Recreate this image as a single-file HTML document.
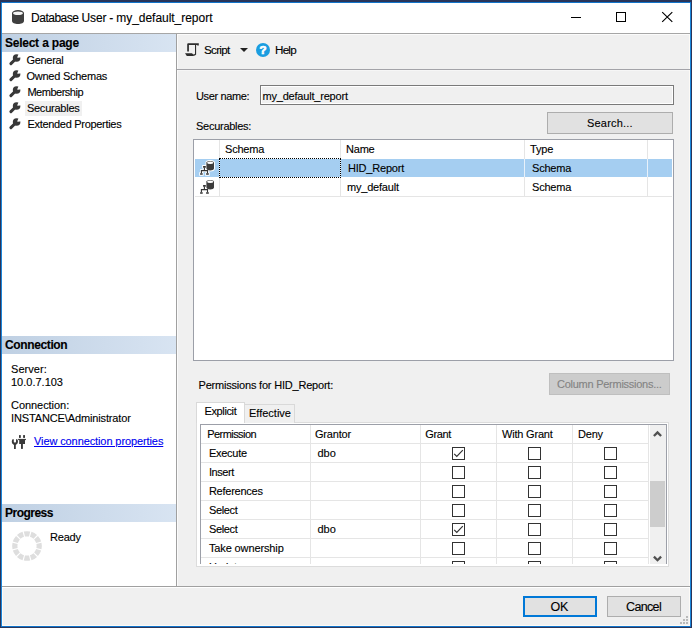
<!DOCTYPE html>
<html><head><meta charset="utf-8"><title>Database User - my_default_report</title>
<style>
*{box-sizing:border-box;margin:0;padding:0}
html,body{width:692px;height:628px;overflow:hidden;background:#fff}
body{font-family:"Liberation Sans",sans-serif;font-size:11px;color:#000;position:relative}
.a{position:absolute}
.t{position:absolute;white-space:nowrap;line-height:14px;height:14px;font-size:11px;letter-spacing:-0.2px;-webkit-text-stroke:0.12px}
.b{font-weight:bold}
.btn{position:absolute;background:#e1e1e1;border:1px solid #adadad}
.vl{position:absolute;width:1px;background:#e5e5e5}
.hl{position:absolute;height:1px;background:#e9e9e9}
.cb{position:absolute;width:13px;height:13px;border:1px solid #333;background:#fff}
svg{position:absolute;overflow:visible}
</style></head><body>
<div class="a" style="left:0px;top:0px;width:692px;height:628px;background:#29355a;"></div>
<div class="a" style="left:1px;top:2px;width:690px;height:625px;background:linear-gradient(180deg,#0f6fc6 0,#1b86da 2px,#1b86da 623px,#0f6fc6 625px);"></div>
<div class="a" style="left:2px;top:3px;width:688px;height:623px;background:#fdfaf6;"></div>
<div class="a" style="left:2px;top:3px;width:688px;height:30px;background:#fff;"></div>
<div class="a" style="left:3px;top:33px;width:686px;height:592px;background:#f0f0f0;"></div>
<div class="a" style="left:2px;top:33px;width:688px;height:1px;background:#a6a6a6;"></div>
<svg style="left:12px;top:10px" width="12" height="14" viewBox="0 0 12 14"><path d="M0 3 V11 C0 12.7 2.7 14 6 14 C9.3 14 12 12.7 12 11 V3 Z" fill="#3f3f3f"/><ellipse cx="6" cy="3" rx="6" ry="3" fill="#3f3f3f"/><ellipse cx="6" cy="3.3" rx="4.9" ry="1.8" fill="#f4f4f4"/></svg>
<div class="t " style="left:31px;top:9.5px;font-size:12px;line-height:16px;height:16px;letter-spacing:-0.17px"><span style="letter-spacing:-0.48px">Database</span><span style="word-spacing:-0.1px"> User - </span><span style="letter-spacing:-0.03px">my_default_report</span></div>
<div class="a" style="left:571px;top:17px;width:10px;height:1px;background:#000;"></div>
<div class="a" style="left:616px;top:12px;width:10px;height:10px;background:transparent;border:1px solid #000"></div>
<svg style="left:661.8px;top:12px" width="11" height="10" viewBox="0 0 11 10"><path d="M0.2 0.1 L10.3 9.9 M10.3 0.1 L0.2 9.9" stroke="#000" stroke-width="1.15" fill="none"/></svg>
<div class="a" style="left:2px;top:34px;width:174px;height:552px;background:#fff;"></div>
<div class="a" style="left:176px;top:34px;width:1px;height:552px;background:#a0a0a0;"></div>
<div class="a" style="left:177px;top:34px;width:513px;height:1px;background:#fbfbfb;"></div>
<div class="a" style="left:177px;top:34px;width:1px;height:552px;background:#fbfbfb;"></div>
<div class="a" style="left:2px;top:34px;width:174px;height:18px;background:linear-gradient(90deg,#bfd0e3,#d8e4f2);"></div>
<div class="t b" style="left:5px;top:36px;font-size:12px;letter-spacing:-0.25px;word-spacing:0.2px">Select a page</div>
<svg style="left:8.5px;top:53.7px" width="12" height="12" viewBox="0 0 12 12"><path d="M1.9 9.6 L6.6 5" stroke="#383838" stroke-width="3" stroke-linecap="round" fill="none"/><circle cx="7.6" cy="4" r="3.8" fill="#383838"/><path d="M9.9 -0.5 L8.3 2.9 Q8 3.8 8.9 3.7 L12.5 3.2 L12.5 -1 Z" fill="#fff"/></svg>
<div class="t " style="left:26.5px;top:52.5px;letter-spacing:-0.32px">General</div>
<svg style="left:8.5px;top:69.7px" width="12" height="12" viewBox="0 0 12 12"><path d="M1.9 9.6 L6.6 5" stroke="#383838" stroke-width="3" stroke-linecap="round" fill="none"/><circle cx="7.6" cy="4" r="3.8" fill="#383838"/><path d="M9.9 -0.5 L8.3 2.9 Q8 3.8 8.9 3.7 L12.5 3.2 L12.5 -1 Z" fill="#fff"/></svg>
<div class="t " style="left:26.5px;top:68.5px;letter-spacing:-0.25px">Owned Schemas</div>
<svg style="left:8.5px;top:85.7px" width="12" height="12" viewBox="0 0 12 12"><path d="M1.9 9.6 L6.6 5" stroke="#383838" stroke-width="3" stroke-linecap="round" fill="none"/><circle cx="7.6" cy="4" r="3.8" fill="#383838"/><path d="M9.9 -0.5 L8.3 2.9 Q8 3.8 8.9 3.7 L12.5 3.2 L12.5 -1 Z" fill="#fff"/></svg>
<div class="t " style="left:27.4px;top:84.5px;letter-spacing:-0.48px">Membership</div>
<div class="a" style="left:25px;top:101px;width:57px;height:15px;background:#f0f0f0;"></div>
<svg style="left:8.5px;top:101.7px" width="12" height="12" viewBox="0 0 12 12"><path d="M1.9 9.6 L6.6 5" stroke="#383838" stroke-width="3" stroke-linecap="round" fill="none"/><circle cx="7.6" cy="4" r="3.8" fill="#383838"/><path d="M9.9 -0.5 L8.3 2.9 Q8 3.8 8.9 3.7 L12.5 3.2 L12.5 -1 Z" fill="#fff"/></svg>
<div class="t " style="left:26.9px;top:100.5px;letter-spacing:-0.24px">Securables</div>
<svg style="left:8.5px;top:117.7px" width="12" height="12" viewBox="0 0 12 12"><path d="M1.9 9.6 L6.6 5" stroke="#383838" stroke-width="3" stroke-linecap="round" fill="none"/><circle cx="7.6" cy="4" r="3.8" fill="#383838"/><path d="M9.9 -0.5 L8.3 2.9 Q8 3.8 8.9 3.7 L12.5 3.2 L12.5 -1 Z" fill="#fff"/></svg>
<div class="t " style="left:27.4px;top:116.5px;letter-spacing:-0.3px">Extended Properties</div>
<div class="a" style="left:2px;top:336px;width:174px;height:18px;background:linear-gradient(90deg,#bfd0e3,#d8e4f2);"></div>
<div class="t b" style="left:5px;top:338px;font-size:12px;letter-spacing:-0.37px;word-spacing:0px">Connection</div>
<div class="t " style="left:11px;top:362px;letter-spacing:0.05px">Server:</div>
<div class="t " style="left:11px;top:375px;letter-spacing:0px">10.0.7.103</div>
<div class="t " style="left:11px;top:398px;letter-spacing:-0.05px">Connection:</div>
<div class="t " style="left:11px;top:411px;letter-spacing:-0.13px">INSTANCE\Administrator</div>
<div class="t " style="left:34px;top:434px;color:#0000f0;text-decoration:underline;letter-spacing:-0.1px">View connection properties</div>
<svg style="left:11px;top:434px" width="16" height="16" viewBox="0 0 16 16"><g fill="#3a3a3a"><path d="M2 5.1 C0.2 6.5 0.4 10 3 10.9 V14.9 H4.8 V10.9 C7.4 10 7.6 6.5 5.8 5.1 L5 5.6 V8 Q3.9 9 2.8 8 V5.6 Z"/><rect x="8" y="1.1" width="1.8" height="2.8"/><rect x="12.1" y="1.1" width="1.9" height="2.8"/><rect x="7.1" y="4.9" width="7.8" height="1.2"/><rect x="8.2" y="6" width="5.8" height="4"/><rect x="10" y="10" width="1.9" height="4.9"/></g></svg>
<svg style="left:12px;top:531px" width="30" height="30" viewBox="-15 -15 30 30"><g fill="#dedede"><path d="M-3.2 -14.5 Q0 -15.2 3.2 -14.5 L2 -9.4 Q0 -9.8 -2 -9.4 Z" transform="rotate(0)"/><path d="M-3.2 -14.5 Q0 -15.2 3.2 -14.5 L2 -9.4 Q0 -9.8 -2 -9.4 Z" transform="rotate(30)"/><path d="M-3.2 -14.5 Q0 -15.2 3.2 -14.5 L2 -9.4 Q0 -9.8 -2 -9.4 Z" transform="rotate(60)"/><path d="M-3.2 -14.5 Q0 -15.2 3.2 -14.5 L2 -9.4 Q0 -9.8 -2 -9.4 Z" transform="rotate(90)"/><path d="M-3.2 -14.5 Q0 -15.2 3.2 -14.5 L2 -9.4 Q0 -9.8 -2 -9.4 Z" transform="rotate(120)"/><path d="M-3.2 -14.5 Q0 -15.2 3.2 -14.5 L2 -9.4 Q0 -9.8 -2 -9.4 Z" transform="rotate(150)"/><path d="M-3.2 -14.5 Q0 -15.2 3.2 -14.5 L2 -9.4 Q0 -9.8 -2 -9.4 Z" transform="rotate(180)"/><path d="M-3.2 -14.5 Q0 -15.2 3.2 -14.5 L2 -9.4 Q0 -9.8 -2 -9.4 Z" transform="rotate(210)"/><path d="M-3.2 -14.5 Q0 -15.2 3.2 -14.5 L2 -9.4 Q0 -9.8 -2 -9.4 Z" transform="rotate(240)"/><path d="M-3.2 -14.5 Q0 -15.2 3.2 -14.5 L2 -9.4 Q0 -9.8 -2 -9.4 Z" transform="rotate(270)"/><path d="M-3.2 -14.5 Q0 -15.2 3.2 -14.5 L2 -9.4 Q0 -9.8 -2 -9.4 Z" transform="rotate(300)"/><path d="M-3.2 -14.5 Q0 -15.2 3.2 -14.5 L2 -9.4 Q0 -9.8 -2 -9.4 Z" transform="rotate(330)"/></g></svg>
<div class="a" style="left:2px;top:504px;width:174px;height:18px;background:linear-gradient(90deg,#bfd0e3,#d8e4f2);"></div>
<div class="t b" style="left:5px;top:506px;font-size:12px;letter-spacing:-0.52px;word-spacing:0px">Progress</div>
<div class="t " style="left:50px;top:530px;">Ready</div>
<div class="a" style="left:177px;top:69px;width:513px;height:1px;background:#a3a3a8;"></div>
<div class="a" style="left:178px;top:70px;width:511px;height:1px;background:#f6f6f6;"></div>
<div class="t " style="left:204px;top:42.5px;font-size:11.7px;letter-spacing:-0.75px">Script</div>
<div class="t " style="left:275px;top:42.5px;font-size:11.7px;letter-spacing:-0.8px">Help</div>
<svg style="left:240px;top:48px" width="8" height="4" viewBox="0 0 8 4"><path d="M0 0 H8 L4 4 Z" fill="#222"/></svg>
<svg style="left:256px;top:43px" width="14" height="14" viewBox="0 0 14 14"><circle cx="7" cy="7" r="7" fill="#1a9de0"/><text x="7" y="11.2" text-anchor="middle" font-family="Liberation Sans, sans-serif" font-weight="bold" font-size="11.5" fill="#fff" stroke="#fff" stroke-width="0.7">?</text></svg>
<svg style="left:185px;top:43px" width="15" height="14" viewBox="0 0 15 14"><g fill="#2d2d2d"><path d="M2.2 1.2 Q2.2 0.2 3.2 0.2 H13.8 V2.6 H12.2 V2 H3.9 V8.6 H2.2 Z"/><rect x="10" y="2" width="1.1" height="9.5"/><path d="M0 10.3 H7.2 C7.4 11.6 9.2 11.9 10 10.8 L11.1 11 C10.8 12.8 9.2 12.9 8 12.9 H1.8 Z"/></g></svg>
<div class="t " style="left:196px;top:89px;letter-spacing:-0.37px">User name:</div>
<div class="a" style="left:260px;top:85px;width:414px;height:20px;background:#f0f0f0;border:1px solid #7a7a7a;box-shadow:inset 0 0 0 1px #fff"></div>
<div class="t " style="left:262.5px;top:89px;">my_default_report</div>
<div class="t " style="left:196px;top:119px;letter-spacing:-0.27px">Securables:</div>
<div class="btn" style="left:547px;top:112px;width:126px;height:22px"></div>
<div class="t " style="left:587px;top:116px;letter-spacing:0.2px">Search...</div>
<div class="a" style="left:193px;top:139px;width:481px;height:222px;background:#fff;border:1px solid #9c9fa8"></div>
<div class="a" style="left:219px;top:140px;width:1px;height:57px;background:#e5e5e5;"></div>
<div class="a" style="left:340px;top:140px;width:1px;height:57px;background:#e5e5e5;"></div>
<div class="a" style="left:524px;top:140px;width:1px;height:57px;background:#e5e5e5;"></div>
<div class="a" style="left:647px;top:140px;width:1px;height:57px;background:#e5e5e5;"></div>
<div class="a" style="left:195px;top:196px;width:477px;height:1px;background:#e5e5e5;"></div>
<div class="t " style="left:225px;top:142px;">Schema</div>
<div class="t " style="left:346px;top:142px;">Name</div>
<div class="t " style="left:530px;top:142px;">Type</div>
<div class="a" style="left:195px;top:159px;width:477px;height:18px;background:#a5cef1;"></div>
<div class="a" style="left:219px;top:159px;width:1px;height:18px;background:#e8f1fa;"></div>
<div class="a" style="left:340px;top:159px;width:1px;height:18px;background:#e8f1fa;"></div>
<div class="a" style="left:524px;top:159px;width:1px;height:18px;background:#e8f1fa;"></div>
<div class="a" style="left:647px;top:159px;width:1px;height:18px;background:#e8f1fa;"></div>
<div class="a" style="left:219px;top:158px;width:122px;height:20px;background:transparent;border:1px dotted #000"></div>
<div class="t " style="left:348px;top:161px;">HID_Report</div>
<div class="t " style="left:532px;top:161px;">Schema</div>
<div class="t " style="left:347px;top:180px;">my_default</div>
<div class="t " style="left:532px;top:180px;">Schema</div>
<svg style="left:199px;top:160px" width="16" height="16" viewBox="0 0 16 16"><path d="M7.4 2.6 C7.4 0.4 15 0.4 15 2.6 V8.6 C15 11.2 7.4 11.2 7.4 8.6 Z" fill="#fff" stroke="#fff" stroke-width="1.8"/><path d="M4.1 5.9 H6.8 V7.7 H4.1 Z M1.1 13.2 H3.7 V14.8 H1.1 Z M7.1 13.2 H9.8 V14.8 H7.1 Z" fill="#fff" stroke="#fff" stroke-width="1.8"/><path d="M5.4 7.5 V10.6 M2.4 13.3 V10.6 H8.5 V13.3" fill="none" stroke="#fff" stroke-width="2.6"/><path d="M7.4 2.6 C7.4 0.4 15 0.4 15 2.6 V8.6 C15 11.2 7.4 11.2 7.4 8.6 Z" fill="#3c3c3c"/><ellipse cx="11.2" cy="2.7" rx="3.1" ry="1.2" fill="#fff"/><path d="M4.1 5.9 H6.8 V7.7 H4.1 Z M1.1 13.2 H3.7 V14.8 H1.1 Z M7.1 13.2 H9.8 V14.8 H7.1 Z" fill="#333"/><path d="M5.4 7.5 V10.6 M2.4 13.3 V10.6 H8.5 V13.3" fill="none" stroke="#333" stroke-width="1.1"/></svg>
<svg style="left:199px;top:179px" width="16" height="16" viewBox="0 0 16 16"><path d="M7.4 2.6 C7.4 0.4 15 0.4 15 2.6 V8.6 C15 11.2 7.4 11.2 7.4 8.6 Z" fill="#fff" stroke="#fff" stroke-width="1.8"/><path d="M4.1 5.9 H6.8 V7.7 H4.1 Z M1.1 13.2 H3.7 V14.8 H1.1 Z M7.1 13.2 H9.8 V14.8 H7.1 Z" fill="#fff" stroke="#fff" stroke-width="1.8"/><path d="M5.4 7.5 V10.6 M2.4 13.3 V10.6 H8.5 V13.3" fill="none" stroke="#fff" stroke-width="2.6"/><path d="M7.4 2.6 C7.4 0.4 15 0.4 15 2.6 V8.6 C15 11.2 7.4 11.2 7.4 8.6 Z" fill="#3c3c3c"/><ellipse cx="11.2" cy="2.7" rx="3.1" ry="1.2" fill="#fff"/><path d="M4.1 5.9 H6.8 V7.7 H4.1 Z M1.1 13.2 H3.7 V14.8 H1.1 Z M7.1 13.2 H9.8 V14.8 H7.1 Z" fill="#333"/><path d="M5.4 7.5 V10.6 M2.4 13.3 V10.6 H8.5 V13.3" fill="none" stroke="#333" stroke-width="1.1"/></svg>
<div class="t " style="left:198.5px;top:377.5px;">Permissions for HID_Report:</div>
<div class="btn" style="left:549px;top:373px;width:121px;height:22px;background:#cccccc;border-color:#bfbfbf"></div>
<div class="t " style="left:557px;top:377px;color:#838383;letter-spacing:-0.26px">Column Permissions...</div>
<div class="a" style="left:196px;top:422px;width:473px;height:145px;background:#fff;border:1px solid #dcdcdc"></div>
<div class="a" style="left:244px;top:404px;width:51px;height:19px;background:#f0f0f0;border:1px solid #d9d9d9;border-bottom:none"></div>
<div class="a" style="left:196px;top:402px;width:49px;height:21px;background:#fff;border:1px solid #d9d9d9;border-bottom:none"></div>
<div class="t " style="left:204.5px;top:404px;letter-spacing:-0.37px">Explicit</div>
<div class="t " style="left:249px;top:406px;letter-spacing:0px">Effective</div>
<div class="a" style="left:200px;top:424px;width:467px;height:140px;background:#fff;border:1px solid #9c9fa8;border-bottom:none"></div>
<div class="a" style="left:310px;top:425px;width:1px;height:139px;background:#e5e5e5;"></div>
<div class="a" style="left:420px;top:425px;width:1px;height:139px;background:#e5e5e5;"></div>
<div class="a" style="left:496px;top:425px;width:1px;height:139px;background:#e5e5e5;"></div>
<div class="a" style="left:572px;top:425px;width:1px;height:139px;background:#e5e5e5;"></div>
<div class="a" style="left:648px;top:425px;width:1px;height:139px;background:#e5e5e5;"></div>
<div class="a" style="left:201px;top:443px;width:448px;height:1px;background:#e5e5e5;"></div>
<div class="a" style="left:201px;top:462px;width:448px;height:1px;background:#e5e5e5;"></div>
<div class="a" style="left:201px;top:481px;width:448px;height:1px;background:#e5e5e5;"></div>
<div class="a" style="left:201px;top:500px;width:448px;height:1px;background:#e5e5e5;"></div>
<div class="a" style="left:201px;top:519px;width:448px;height:1px;background:#e5e5e5;"></div>
<div class="a" style="left:201px;top:538px;width:448px;height:1px;background:#e5e5e5;"></div>
<div class="a" style="left:201px;top:557px;width:448px;height:1px;background:#e5e5e5;"></div>
<div class="t " style="left:207.2px;top:427px;letter-spacing:-0.55px">Permission</div>
<div class="t " style="left:315px;top:427px;">Grantor</div>
<div class="t " style="left:425.3px;top:427px;letter-spacing:-0.4px">Grant</div>
<div class="t " style="left:502px;top:427px;">With Grant</div>
<div class="t " style="left:578px;top:427px;">Deny</div>
<div class="a" style="left:201px;top:444px;width:447px;height:120px;overflow:hidden">
<div class="t" style="left:7.9px;top:2px;letter-spacing:-0.25px">Execute</div>
<div class="t" style="left:116.5px;top:2px;letter-spacing:0px">dbo</div>
<div class="cb" style="left:251px;top:3px"></div>
<svg style="left:251px;top:3px" width="13" height="13" viewBox="0 0 13 13"><path d="M2.2 6.8 L4.8 9.5 L10.8 3.2" stroke="#333" stroke-width="1.2" fill="none"/></svg>
<div class="cb" style="left:327px;top:3px"></div>
<div class="cb" style="left:403px;top:3px"></div>
<div class="t" style="left:7.9px;top:21px;letter-spacing:-0.42px">Insert</div>
<div class="cb" style="left:251px;top:22px"></div>
<div class="cb" style="left:327px;top:22px"></div>
<div class="cb" style="left:403px;top:22px"></div>
<div class="t" style="left:7.9px;top:40px;letter-spacing:-0.24px">References</div>
<div class="cb" style="left:251px;top:41px"></div>
<div class="cb" style="left:327px;top:41px"></div>
<div class="cb" style="left:403px;top:41px"></div>
<div class="t" style="left:7.9px;top:59px;letter-spacing:-0.33px">Select</div>
<div class="cb" style="left:251px;top:60px"></div>
<div class="cb" style="left:327px;top:60px"></div>
<div class="cb" style="left:403px;top:60px"></div>
<div class="t" style="left:7.9px;top:78px;letter-spacing:-0.33px">Select</div>
<div class="t" style="left:116.5px;top:78px;letter-spacing:0px">dbo</div>
<div class="cb" style="left:251px;top:79px"></div>
<svg style="left:251px;top:79px" width="13" height="13" viewBox="0 0 13 13"><path d="M2.2 6.8 L4.8 9.5 L10.8 3.2" stroke="#333" stroke-width="1.2" fill="none"/></svg>
<div class="cb" style="left:327px;top:79px"></div>
<div class="cb" style="left:403px;top:79px"></div>
<div class="t" style="left:7.9px;top:97px;letter-spacing:-0.12px">Take ownership</div>
<div class="cb" style="left:251px;top:98px"></div>
<div class="cb" style="left:327px;top:98px"></div>
<div class="cb" style="left:403px;top:98px"></div>
<div class="t" style="left:7.9px;top:116px;letter-spacing:-0.3px">Update</div>
<div class="cb" style="left:251px;top:117px"></div>
<div class="cb" style="left:327px;top:117px"></div>
<div class="cb" style="left:403px;top:117px"></div>
</div>
<div class="a" style="left:650px;top:425px;width:16px;height:139px;background:#f0f0f0;"></div>
<div class="a" style="left:650px;top:481px;width:15px;height:46px;background:#cdcdcd;"></div>
<svg style="left:653px;top:430px" width="9" height="7" viewBox="0 0 9 7"><path d="M0.9 6 L4.5 2.4 L8.1 6" stroke="#505050" stroke-width="2.3" fill="none"/></svg>
<svg style="left:653px;top:555px" width="9" height="7" viewBox="0 0 9 7"><path d="M0.9 1.6 L4.5 5.2 L8.1 1.6" stroke="#505050" stroke-width="2.3" fill="none"/></svg>
<div class="a" style="left:2px;top:586px;width:688px;height:1px;background:#a0a0a0;"></div>
<div class="a" style="left:2px;top:587px;width:688px;height:1px;background:#fff;"></div>
<div class="btn" style="left:523px;top:596px;width:74px;height:21px;border:2px solid #0078d7"></div>
<div class="t " style="left:550.5px;top:600px;font-size:12.5px;letter-spacing:-0.3px">OK</div>
<div class="btn" style="left:607px;top:596px;width:74px;height:21px"></div>
<div class="t " style="left:626px;top:600px;font-size:12.5px;letter-spacing:-0.65px">Cancel</div>
<div class="a" style="left:686px;top:616px;width:2px;height:2px;background:#b9b9b9;"></div>
<div class="a" style="left:683px;top:619px;width:2px;height:2px;background:#b9b9b9;"></div>
<div class="a" style="left:686px;top:619px;width:2px;height:2px;background:#b9b9b9;"></div>
<div class="a" style="left:680px;top:622px;width:2px;height:2px;background:#b9b9b9;"></div>
<div class="a" style="left:683px;top:622px;width:2px;height:2px;background:#b9b9b9;"></div>
<div class="a" style="left:686px;top:622px;width:2px;height:2px;background:#b9b9b9;"></div>
</body></html>
